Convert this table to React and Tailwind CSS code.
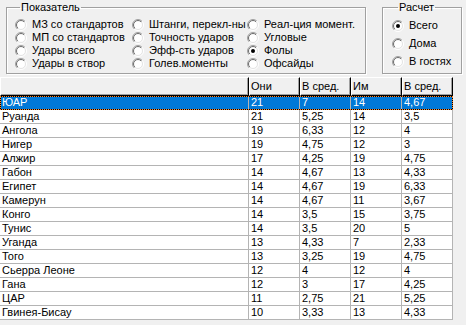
import { useId } from 'react';

const rows = [
  ['ЮАР', '21', '7', '14', '4,67'],
  ['Руанда', '21', '5,25', '14', '3,5'],
  ['Ангола', '19', '6,33', '12', '4'],
  ['Нигер', '19', '4,75', '12', '3'],
  ['Алжир', '17', '4,25', '19', '4,75'],
  ['Габон', '14', '4,67', '13', '4,33'],
  ['Египет', '14', '4,67', '19', '6,33'],
  ['Камерун', '14', '4,67', '11', '3,67'],
  ['Конго', '14', '3,5', '15', '3,75'],
  ['Тунис', '14', '3,5', '20', '5'],
  ['Уганда', '13', '4,33', '7', '2,33'],
  ['Того', '13', '3,25', '19', '4,75'],
  ['Сьерра Леоне', '12', '4', '12', '4'],
  ['Гана', '12', '3', '17', '4,25'],
  ['ЦАР', '11', '2,75', '21', '5,25'],
  ['Гвинея-Бисау', '10', '3,33', '13', '4,33'],
];

function Radio({ label, checked }) {
  const id = useId().replace(/:/g, '');
  return (
    <div className="flex items-center h-[13px] whitespace-nowrap">
      <svg width="12" height="12" viewBox="0 0 12 12" className="shrink-0">
        <defs>
          <linearGradient id={`o${id}`} x1="0" y1="0" x2="1" y2="1">
            <stop offset="0.5" stopColor="#a0a0a0" />
            <stop offset="0.5" stopColor="#ffffff" />
          </linearGradient>
          <linearGradient id={`i${id}`} x1="0" y1="0" x2="1" y2="1">
            <stop offset="0.5" stopColor="#696969" />
            <stop offset="0.5" stopColor="#e3e3e3" />
          </linearGradient>
        </defs>
        <circle cx="6" cy="6" r="5.5" fill="none" stroke={`url(#o${id})`} />
        <circle cx="6" cy="6" r="4.5" fill="#fff" stroke={`url(#i${id})`} />
        {checked && <circle cx="6" cy="6" r="2" fill="#000" />}
      </svg>
      <span className="ml-[5px]">{label}</span>
    </div>
  );
}

function HeaderCell({ children, w }) {
  return (
    <div className={`${w} h-[19px] shrink-0 border-t border-l border-t-white border-l-white border-r border-b border-r-black border-b-black shadow-[inset_-1px_-1px_0_#a0a0a0] pl-[1px] leading-[16px]`}>
      {children}
    </div>
  );
}

function Row({ cells, selected }) {
  return (
    <div className={`relative flex h-[14px] ${selected ? 'bg-[#0078d7] text-white' : 'bg-white'}`}>
      {cells.map((c, i) => (
        <div
          key={i}
          className={`${i === 0 ? 'w-[249px]' : 'w-[51px]'} shrink-0 border-r border-b border-[#b4b4b4] pl-[2px] leading-[13px] overflow-hidden whitespace-nowrap`}
        >
          {c}
        </div>
      ))}
      {selected && (
        <>
          <div className="absolute inset-0 border border-black" />
          <div className="absolute inset-0 border border-dotted border-[#ff8728]" />
        </>
      )}
    </div>
  );
}

export default function App() {
  const col1 = ['МЗ со стандартов', 'МП со стандартов', 'Удары всего', 'Удары в створ'];
  const col2 = ['Штанги, перекл-ны', 'Точность ударов', 'Эфф-сть ударов', 'Голев.моменты'];
  const col3 = ['Реал-ция момент.', 'Угловые', 'Фолы', 'Офсайды'];

  return (
    <div className="w-[466px] h-[325px] bg-[#f0f0f0] overflow-hidden font-['Liberation_Sans',Arial,sans-serif] text-[11px] text-black">
      {/* options */}
      <div className="flex h-[77px] pt-[1px] pl-[6px]">
        <fieldset className="w-[360px] h-[73px] border border-[#a0a0a0] shadow-[inset_1px_1px_0_#fff,1px_1px_0_#fff] pl-[8px]">
          <legend className="ml-[5px] px-[1px] leading-[13px]">Показатель</legend>
          <div className="grid grid-cols-[117px_115px_1fr] pt-[4px]">
            <div className="flex flex-col">
              {col1.map((l) => <Radio key={l} label={l} />)}
            </div>
            <div className="flex flex-col">
              {col2.map((l) => <Radio key={l} label={l} />)}
            </div>
            <div className="flex flex-col">
              {col3.map((l) => <Radio key={l} label={l} checked={l === 'Фолы'} />)}
            </div>
          </div>
        </fieldset>
        <fieldset className="ml-[16px] w-[80px] h-[73px] border border-[#a0a0a0] shadow-[inset_1px_1px_0_#fff,1px_1px_0_#fff] pl-[9px]">
          <legend className="ml-[6px] px-[1px] leading-[13px]">Расчет</legend>
          <div className="flex flex-col gap-[5px] pt-[5px]">
            <Radio label="Всего" checked />
            <Radio label="Дома" />
            <Radio label="В гостях" />
          </div>
        </fieldset>
      </div>

      {/* grid */}
      <div className="w-[453px]">
        <div className="flex">
          <HeaderCell w="w-[249px]" />
          <HeaderCell w="w-[51px]">Они</HeaderCell>
          <HeaderCell w="w-[51px]">В сред.</HeaderCell>
          <HeaderCell w="w-[51px]">Им</HeaderCell>
          <HeaderCell w="w-[51px]">В сред.</HeaderCell>
        </div>
        {rows.map((r, i) => (
          <Row key={r[0]} cells={r} selected={i === 0} />
        ))}
      </div>
    </div>
  );
}
